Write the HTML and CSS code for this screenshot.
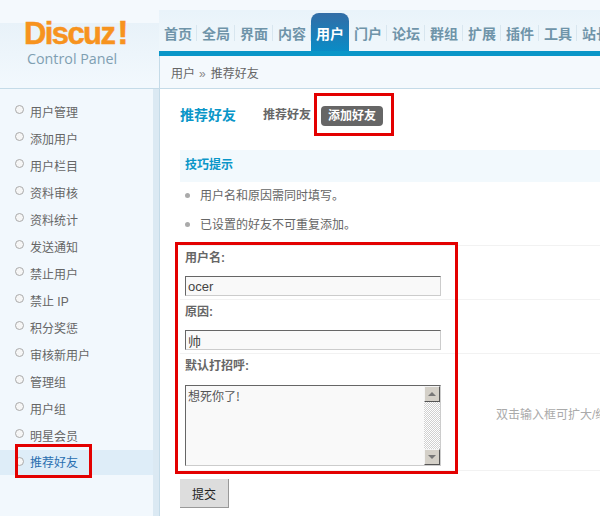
FILE: index.html
```html
<!DOCTYPE html>
<html lang="zh">
<head>
<meta charset="utf-8">
<title>Discuz! Control Panel</title>
<link rel="stylesheet" href="styles.css">
</head>
<body>
<div class="page">
  <div class="brand">
    <div class="logo">Discuz<span class="bang">!</span></div>
    <div class="logo-sub">Control Panel</div>
  </div>
  <div class="top">
    <nav class="nav">
      <a class="tab">首页</a><a class="tab">全局</a><a class="tab">界面</a><a class="tab">内容</a><a class="tab active">用户</a><a class="tab">门户</a><a class="tab">论坛</a><a class="tab">群组</a><a class="tab">扩展</a><a class="tab">插件</a><a class="tab">工具</a><a class="tab">站长</a>
    </nav>
    <div class="crumb">用户<span class="sep">»</span>推荐好友</div>
  </div>
  <aside class="side">
    <ul class="menu">
      <li>用户管理</li><li>添加用户</li><li>用户栏目</li><li>资料审核</li><li>资料统计</li><li>发送通知</li><li>禁止用户</li><li>禁止 IP</li><li>积分奖惩</li><li>审核新用户</li><li>管理组</li><li>用户组</li><li>明星会员</li><li class="current">推荐好友</li>
    </ul>
  </aside>
  <main class="main">
    <div class="title-row">
      <h3 class="title">推荐好友</h3>
      <span class="sub">推荐好友</span>
      <span class="pill">添加好友</span>
    </div>
    <div class="tips-head">技巧提示</div>
    <ul class="tips">
      <li>用户名和原因需同时填写。</li>
      <li>已设置的好友不可重复添加。</li>
    </ul>
    <form class="form">
      <div class="field short">
        <label class="label">用户名:</label>
        <input class="input" type="text" value="ocer">
      </div>
      <div class="field short">
        <label class="label">原因:</label>
        <input class="input" type="text" value="帅">
      </div>
      <div class="field tall">
        <label class="label label-tall">默认打招呼:</label>
        <div class="area-row">
          <div class="area">
            <textarea class="area-text">想死你了!</textarea>
            <div class="bar">
              <span class="arrow"><svg width="16" height="16" viewBox="0 0 16 16"><path d="M4 10 L8 6 L12 10 Z" fill="#777"/></svg></span>
              <span class="track"></span>
              <span class="arrow"><svg width="16" height="16" viewBox="0 0 16 16"><path d="M4 6 L12 6 L8 10 Z" fill="#777"/></svg></span>
            </div>
          </div>
          <span class="hint">双击输入框可扩大/缩小</span>
        </div>
      </div>
      <button class="submit" type="button">提交</button>
    </form>
  </main>
  <div class="mark mark-tab"></div>
  <div class="mark mark-form"></div>
  <div class="mark mark-side"></div>
</div>
</body>
</html>
```
FILE: styles.css
```css
* { box-sizing: border-box; }
html, body { margin: 0; padding: 0; height: 100%; overflow: hidden; background: #fff; }
body { font: 12px/18px "Liberation Sans", "Noto Sans CJK SC", sans-serif; color: #666; }
ul { list-style: none; margin: 0; padding: 0; }
h3 { margin: 0; }

.page { position: relative; width: 600px; height: 516px; overflow: hidden; display: grid; grid-template-columns: 159px 1fr; grid-template-rows: 89px 1fr; }

.brand { background: linear-gradient(#f4f9fd 0, #f4f9fd 23px, #e8f2f9 23px, #f2f8fd 84px); border-bottom: 1px solid #c5dbe8; padding: 17px 0 0 24px; }
.logo { font: bold 31px/33px "Liberation Sans", sans-serif; letter-spacing: -1.6px; color: #f7931e; -webkit-text-stroke: 0.5px #f7931e; height: 33px; white-space: nowrap; }
.bang { font-size: 34px; line-height: 0; margin-left: 3px; }
.logo-sub { font: 14.3px/18px "Open Sans", sans-serif; color: #7f9fb2; margin: 0 0 0 3px; white-space: nowrap; }

.top { display: flex; flex-direction: column; min-width: 0; background: #f4f9fd; }
.nav { height: 56px; flex: none; padding: 13px 0 0 0; display: flex; border-bottom: 5px solid #0a96c8; background: linear-gradient(#f4f9fd 0, #f4f9fd 10px, #e9f3fa 10px, #eef6fb 38px); overflow: hidden; }
.tab { flex: none; width: 38px; height: 38px; text-align: center; font: bold 14px/40px "Noto Sans CJK SC", sans-serif; color: #6f94a9; position: relative; }
.tab::after { content: ""; position: absolute; right: 0; top: 12px; height: 16px; border-right: 1px solid #d8e6ef; }
.tab.active { color: #fff; border-radius: 8px 8px 0 0; background: linear-gradient(#316ca6, #0a8cc6); }
.tab.active::after { display: none; }
.crumb { height: 33px; flex: none; padding: 5px 0 0 11px; line-height: 27px; color: #666; border-left: 1px solid #c5dbe8; border-bottom: 1px solid #c5dbe8; }
.sep { color: #888; margin: 0 5px 0 4px; }

.side { background: linear-gradient(90deg, #f2f8fd 0, #f2f8fd 153px, #dbe9f3 153px, #dbe9f3 159px); border-right: 1px solid #c5dbe8; padding: 11px 0 0 0; width: 160px; }
.menu li { height: 27px; line-height: 27px; padding-left: 30px; position: relative; color: #666; width: 153px; }
.menu li::before { content: ""; position: absolute; left: 15px; top: 5px; width: 7px; height: 7px; border: 1px solid #aaa; border-radius: 50%; background: #f6f6f6; }
.menu li.current { color: #2a6fb0; background: #deedf8; height: 25px; line-height: 26px; margin-top: -1px; }
.menu li.current::before { top: 7px; }

.main { padding: 0 0 0 21px; min-width: 0; position: relative; }
.title-row { height: 61px; display: flex; align-items: center; padding-bottom: 9px; }
.title { font: bold 14px/20px "Noto Sans CJK SC", sans-serif; color: #0a96c8; width: 83px; margin-top: -2px; }
.sub { font-weight: bold; color: #666; width: 58px; }
.pill { width: 62px; height: 20px; line-height: 20px; text-align: center; font-weight: bold; color: #fff; background: #666; border-radius: 4px; margin-top: 2px; }
.tips-head { height: 32px; line-height: 30px; padding-left: 5px; font-weight: bold; color: #0a96c8; background: #f2f9fd; }
.tips { height: 64px; padding-top: 1px; border-bottom: 1px solid #f2f2f2; }
.tips li { height: 29px; line-height: 27px; padding-left: 20px; position: relative; color: #666; }
.tips li::before { content: ""; position: absolute; left: 5px; top: 10px; width: 5px; height: 5px; border-radius: 50%; background: #aaa; }

.form { display: block; }
.field { padding: 3px 0 0 5px; border-bottom: 1px solid #f2f2f2; }
.field.short { height: 54px; }
.field.tall { height: 117px; }
.label { display: block; font-weight: bold; color: #666; height: 27px; line-height: 18px; }
.label-tall { height: 28px; }
.input { display: block; width: 256px; height: 20px; padding: 1px 2px; border: 1px solid #ccc; border-top-color: #666; border-left-color: #666; background: #f9f9f9; color: #444; font: 13px/16px "Liberation Sans", "Noto Sans CJK SC", sans-serif; border-radius: 0; outline: 0; }
.area-row { display: flex; align-items: center; }
.area { flex: none; width: 256px; height: 81px; border: 1px solid #ccc; border-top-color: #666; border-left-color: #666; background: #f9f9f9; display: flex; }
.area-text { flex: 1; min-width: 0; height: 100%; border: 0; padding: 1px 2px; margin: 0; resize: none; background: transparent; color: #555; font: 12px/17px "Noto Sans CJK TC", "Noto Sans CJK SC", sans-serif; overflow: hidden; outline: 0; }
.bar { flex: none; width: 16px; display: flex; flex-direction: column; }
.arrow { height: 16px; width: 16px; display: block; background: #d4d0c8; border: 1px solid; border-color: #f4f4f4 #555 #555 #f4f4f4; }
.arrow svg { display: block; margin: -1px; }
.track { flex: 1; background: repeating-conic-gradient(#d0d0d0 0 25%, #fff 0 50%) 0 0 / 2px 2px; }
.hint { flex: none; margin-left: 55px; padding-bottom: 21px; color: #aaa; white-space: nowrap; }
.submit { display: block; width: 49px; height: 29px; margin-top: 8px; padding: 0; border: 0; border-right: 1px solid #999; border-bottom: 1px solid #999; background: #ddd; color: #222; font: 12px/27px "Noto Sans CJK SC", sans-serif; }

.mark { position: absolute; border: 3px solid #e30000; pointer-events: none; }
.mark-tab { left: 314px; top: 93px; width: 80px; height: 43px; }
.mark-form { left: 175px; top: 242px; width: 283px; height: 232px; }
.mark-side { left: 15px; top: 444px; width: 77px; height: 34px; }
```
